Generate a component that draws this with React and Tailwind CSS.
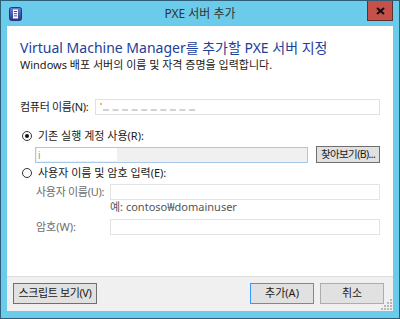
import React from "react";

const font = { fontFamily: '"Noto Sans", "Noto Sans CJK KR", sans-serif' };

function AppIcon() {
  return (
    <svg width="13" height="14" viewBox="0 0 13 14">
      <defs>
        <linearGradient id="ig" x1="0" y1="0" x2="0" y2="1">
          <stop offset="0" stopColor="#6a7fd0" />
          <stop offset="1" stopColor="#27338a" />
        </linearGradient>
      </defs>
      <rect x="0.5" y="0.5" width="12" height="13" rx="2" fill="url(#ig)" stroke="#2a3478" />
      <rect x="4" y="2.5" width="5" height="9" fill="#fff" />
      <rect x="4.8" y="4" width="3.4" height="1" fill="#3a4a9a" />
      <rect x="4.8" y="6.2" width="3.4" height="1" fill="#3a4a9a" />
      <rect x="4.8" y="8.4" width="3.4" height="1" fill="#3a4a9a" />
    </svg>
  );
}

function Radio({ checked }) {
  return (
    <span className="w-[10px] h-[10px] rounded-full border border-[#333] bg-white flex items-center justify-center shrink-0">
      {checked ? <span className="w-[4px] h-[4px] rounded-full bg-[#111]" /> : null}
    </span>
  );
}

function Grip() {
  const dots = [
    [9, 0],
    [6, 3], [9, 3],
    [3, 6], [6, 6], [9, 6],
    [0, 9], [3, 9], [6, 9], [9, 9],
  ];
  return (
    <svg width="11" height="11" viewBox="0 0 11 11">
      {dots.map(([x, y], i) => (
        <rect key={i} x={x} y={y} width="2" height="2" fill="#b8b8b8" />
      ))}
    </svg>
  );
}

export default function App() {
  return (
    <div
      className="w-[400px] h-[319px] bg-[#6bcbea] border border-[#2f5f78] flex flex-col text-[11px] text-[#1a1a1a] overflow-hidden whitespace-nowrap"
      style={font}
    >
      {/* title bar */}
      <div className="h-[25px] flex items-start shrink-0">
        <div className="w-[40px] pl-[8px] pt-[6px]">
          <AppIcon />
        </div>
        <div className="flex-1 text-center pt-[4px] text-[12px] text-[#333]">PXE 서버 추가</div>
        <div className="w-[40px] flex justify-end pr-[6px]">
          <div className="-mt-px w-[26px] h-[21px] bg-[#c7504b] border border-[#5a3030] flex items-center justify-center">
            <svg width="9" height="8" viewBox="0 0 9 8">
              <path d="M1 1 L8 7 M8 1 L1 7" stroke="#111" strokeWidth="2.2" />
            </svg>
          </div>
        </div>
      </div>

      {/* body */}
      <div className="flex-1 mx-[6px] flex flex-col bg-white">
        <div className="flex-1 flex flex-col pl-[13px] pr-[13px] pt-[12px]">
          <div className="leading-[20px] text-[14px] text-[#22409a]">
            Virtual Machine Manager를 추가할 PXE 서버 지정
          </div>
          <div className="leading-[14px]">Windows 배포 서버의 이름 및 자격 증명을 입력합니다.</div>

          <div className="mt-[27px] flex items-center h-[16px]">
            <span className="w-[75px] shrink-0 tracking-[-0.3px]">컴퓨터 이름(N):</span>
            <div className="flex-1 h-[16px] border border-[#e0e0e0] flex items-center pl-[4px] gap-[1px]">
              <span className="w-[2px] h-[2px] bg-[#f0c040] self-start mt-[3px]" />
              <span className="w-[92px] mt-[6px] border-b-2 border-dashed border-[#d2d2d2]" />
            </div>
          </div>

          <div className="mt-[14px] flex items-center h-[14px] gap-[6px] pl-[2px]">
            <Radio checked />
            <span>기존 실행 계정 사용(R):</span>
          </div>

          <div className="mt-[3px] flex items-center h-[17px] pl-[15px]">
            <div className="w-[273px] h-[16px] bg-[#f0f0f0] border border-[#a9c9e8] flex items-center pl-px">
              <div className="w-[80px] h-[13px] bg-white flex items-center pl-[1px] text-[10px] text-[#999] leading-none">
                i
              </div>
            </div>
            <div className="ml-[8px] w-[64px] h-[17px] bg-[#e1e1e1] border border-[#6e6e6e] flex items-center justify-center text-[10.5px] tracking-[-0.6px] leading-none">
              찾아보기(B)...
            </div>
          </div>

          <div className="mt-[3px] flex items-center h-[14px] gap-[6px] pl-[2px]">
            <Radio />
            <span>사용자 이름 및 암호 입력(E):</span>
          </div>

          <div className="mt-[4px] flex items-center h-[16px] pl-[16px]">
            <span className="w-[74px] shrink-0 text-[#6d6d6d] tracking-[-0.3px]">사용자 이름(U):</span>
            <div className="flex-1 h-[16px] border border-[#e3e3e3]" />
          </div>
          <div className="leading-[14px] pl-[90px] text-[#555]">예: contoso₩domainuser</div>
          <div className="mt-[5px] flex items-center h-[16px] pl-[16px]">
            <span className="w-[74px] shrink-0 text-[#6d6d6d]">암호(W):</span>
            <div className="flex-1 h-[16px] border border-[#e3e3e3]" />
          </div>
        </div>

        {/* footer */}
        <div className="h-[35px] shrink-0 bg-[#f0f0f0] border-t border-[#dcdcdc] flex items-start pt-[6px] pl-[6px] pr-[9px]">
          <div className="w-[84px] h-[21px] bg-[#e1e1e1] border border-[#707070] flex items-center justify-center tracking-[-0.4px]">
            스크립트 보기(V)
          </div>
          <div className="flex-1" />
          <div className="w-[64px] h-[21px] bg-[#e1e1e1] border border-[#3399ff] flex items-center justify-center">
            추가(A)
          </div>
          <div className="ml-[6px] w-[64px] h-[21px] bg-[#e1e1e1] border border-[#adadad] flex items-center justify-center">
            취소
          </div>
          <div className="self-end -mr-[8px] mb-[1px] ml-[-3px]">
            <Grip />
          </div>
        </div>
      </div>

      <div className="h-[7px] shrink-0" />
    </div>
  );
}
